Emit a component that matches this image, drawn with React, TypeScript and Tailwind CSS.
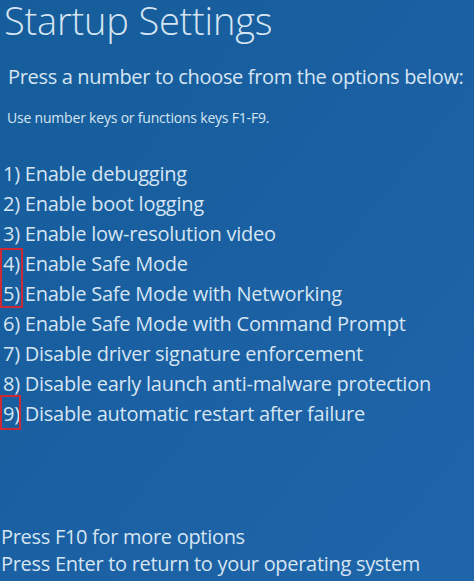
const options = [
  "Enable debugging",
  "Enable boot logging",
  "Enable low-resolution video",
  "Enable Safe Mode",
  "Enable Safe Mode with Networking",
  "Enable Safe Mode with Command Prompt",
  "Disable driver signature enforcement",
  "Disable early launch anti-malware protection",
  "Disable automatic restart after failure",
];

export default function App() {
  return (
    <div
      className="relative flex h-[581px] w-full flex-col overflow-hidden bg-gradient-to-br from-[#165d9b] via-[#1a60a2] to-[#1f65aa] text-[#d6e5f2]"
      style={{ fontFamily: '"Open Sans", "Noto Sans", sans-serif' }}
    >
      <h1 className="pl-[4px] pt-[2px] text-[38px] font-light leading-[36px] tracking-[-0.2px]">Startup Settings</h1>
      <p className="mt-[25px] pl-[8px] text-[20px] leading-[28px] tracking-[-0.33px]">
        Press a number to choose from the options below:
      </p>
      <p className="mt-[17px] pl-[7px] text-[14px] leading-[20px] tracking-[-0.2px]">
        Use number keys or functions keys F1-F9.
      </p>

      <ul className="relative mt-[31px] flex flex-col">
        {options.map((label, i) => (
          <li key={label} className="h-[30px] pl-[3px] text-[20px] leading-[30px] tracking-[-0.25px]">
            {i + 1}) {label}
          </li>
        ))}
        <div className="absolute left-0 top-[89px] h-[60px] w-[23px] border-2 border-[#cc2a36]" />
        <div className="absolute left-0 top-[236px] h-[35px] w-[21px] border-2 border-[#cc2a36]" />
      </ul>

      <div className="mt-auto flex flex-col pb-[4px] pl-[1px] text-[20px] leading-[27px] tracking-[-0.3px]">
        <p>Press F10 for more options</p>
        <p>Press Enter to return to your operating system</p>
      </div>
    </div>
  );
}
